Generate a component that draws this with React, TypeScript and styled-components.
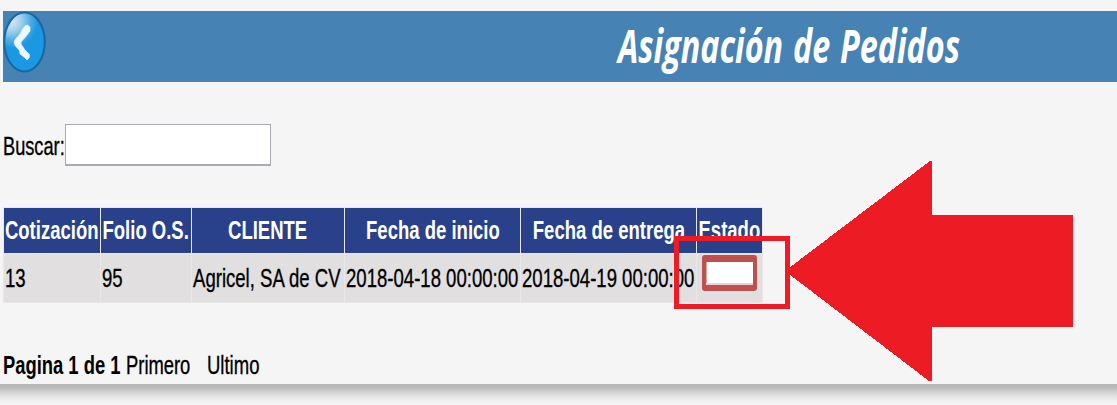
import React from "react";
import styled, { createGlobalStyle } from "styled-components";

const GlobalStyle = createGlobalStyle`
  body {
    margin: 0;
    background: #f5f5f5;
    overflow: hidden;
    font-family: "Liberation Sans", Arial, sans-serif;
  }
`;

const Page = styled.main`
  position: relative;
  box-sizing: border-box;
  width: 1117px;
  height: 405px;
  padding: 11px 0 0 3px;
  display: flex;
  flex-direction: column;
  color: #000;
  overflow: hidden;
`;

const Condensed = styled.span<{ $scale: number; $bold?: boolean; $size?: number; $center?: boolean }>`
  display: block;
  flex: none;
  white-space: pre;
  font-size: ${(p) => p.$size ?? 26}px;
  line-height: 30px;
  font-weight: ${(p) => (p.$bold ? 700 : 400)};
  -webkit-text-stroke: ${(p) => (p.$bold ? 0 : 0.35)}px currentColor;
  transform: scaleX(${(p) => p.$scale});
  transform-origin: ${(p) => (p.$center ? "center" : "left")} center;
`;

const Banner = styled.header`
  display: flex;
  flex: none;
  height: 71px;
  background: #4682b4;
`;

const BackButton = styled.button`
  width: 43px;
  height: 62px;
  padding: 0;
  border: 0;
  background: none;

  svg {
    display: block;
  }
`;

const Title = styled.h1`
  margin: 9px 0 0 572px;
  font: italic 700 46px/50px "Open Sans", sans-serif;
  color: #fff;
  white-space: nowrap;
  word-spacing: 2px;
  transform: scaleX(0.703);
  transform-origin: left center;
`;

const SearchRow = styled.label`
  display: flex;
  flex: none;
  align-items: center;
  height: 42px;
  margin-top: 42px;
`;

const SearchLabel = styled.span`
  display: flex;
  width: 62px;
  padding-top: 2px;
`;

const SearchInput = styled.input`
  box-sizing: border-box;
  width: 206px;
  height: 42px;
  padding: 0 6px;
  border: 1px solid #abaab3;
  border-bottom-width: 2px;
  border-radius: 0;
  background: #fff;
  font: 20px "Liberation Sans", sans-serif;
  outline: 0;
`;

const Table = styled.div`
  display: grid;
  flex: none;
  grid-template-columns: 96px 90px 152px 175px 175px 65px;
  grid-template-rows: 45px 48px;
  gap: 1px;
  width: 758px;
  box-sizing: content-box;
  margin-top: 41px;
  padding: 1px;
  background: #e9e7e7;
`;

const HeadCell = styled.div`
  display: flex;
  min-width: 0;
  justify-content: center;
  align-items: center;
  padding-bottom: 2px;
  background: #29418a;
  color: #fff;
`;

const Cell = styled.div`
  display: flex;
  min-width: 0;
  align-items: center;
  padding-left: 1px;
  background: #e1dfe0;
`;

const StatusField = styled.div`
  box-sizing: border-box;
  width: 55px;
  height: 36px;
  margin: -10px 0 0 4px;
  border: 4px solid #c0504d;
  border-top-width: 7px;
  border-bottom-width: 6px;
  border-radius: 3px;
  background: #fff;
  box-shadow: inset 0 -2px 0 #e6d3d3, inset 1px 0 0 #dba5a4;
`;

const Pager = styled.nav`
  display: flex;
  flex: none;
  margin-top: 47px;
  height: 34px;
`;

const PagerItem = styled.span<{ $width: number }>`
  display: flex;
  width: ${(p) => p.$width}px;
`;

const BottomShadow = styled.footer`
  flex: none;
  height: 21px;
  margin-left: -3px;
  background: linear-gradient(#b3b3b3 0, #bdbdbd 4px, #dadada 10px, #ebebeb 15px, #f7f7f7 21px);
`;

const Highlight = styled.div`
  position: absolute;
  box-sizing: border-box;
  left: 674px;
  top: 236px;
  width: 116px;
  height: 73px;
  border: 5px solid #ed1c24;
`;

const Arrow = styled.svg`
  position: absolute;
  left: 785px;
  top: 161px;
`;

const columns = [
  { title: "Cotización", value: "13" },
  { title: "Folio O.S.", value: "95" },
  { title: "CLIENTE", value: "Agricel, SA de CV" },
  { title: "Fecha de inicio", value: "2018-04-18 00:00:00" },
  { title: "Fecha de entrega", value: "2018-04-19 00:00:00" },
  { title: "Estado", value: null },
];

export default function App() {
  return (
    <Page>
      <GlobalStyle />
      <Banner>
        <BackButton aria-label="Regresar">
          <svg width="43" height="62" viewBox="0 0 43 62">
            <defs>
              <radialGradient id="gloss" gradientUnits="userSpaceOnUse" cx="8" cy="10" r="27">
                <stop offset="0" stopColor="#d5e9f5" />
                <stop offset="0.35" stopColor="#a9d3ee" />
                <stop offset="0.75" stopColor="#4aa9e4" />
                <stop offset="1" stopColor="#1b98e3" />
              </radialGradient>
            </defs>
            <ellipse cx="21.500" cy="31" rx="20.300" ry="29.500" fill="url(#gloss)" stroke="#176aa1" strokeWidth="2.200" />
            <path
              d="M24.500 14L27 16V20L22.500 26L18 31V33L22 39L26.500 43.500V46.500L24 49L21.500 46.500L17 43L16.500 39.500L12 34.500L11 31L12.500 28L17 23L19.500 18L22 15Z"
              fill="#edf7fd"
              stroke="#edf7fd"
              strokeWidth="0.600"
            />
          </svg>
        </BackButton>
        <Title>Asignación de Pedidos</Title>
      </Banner>
      <SearchRow>
        <SearchLabel>
          <Condensed $scale={0.7}>Buscar:</Condensed>
        </SearchLabel>
        <SearchInput type="text" />
      </SearchRow>
      <Table>
        {columns.map((c) => (
          <HeadCell key={c.title}>
            <Condensed $bold $center $scale={0.712}>{c.title}</Condensed>
          </HeadCell>
        ))}
        {columns.map((c) => (
          <Cell key={c.title}>
            {c.value ? <Condensed $scale={0.714}>{c.value}</Condensed> : <StatusField />}
          </Cell>
        ))}
      </Table>
      <Pager>
        <PagerItem $width={123}>
          <Condensed $bold $size={25} $scale={0.735}>Pagina 1 de 1</Condensed>
        </PagerItem>
        <PagerItem $width={81}>
          <Condensed $size={25} $scale={0.735}>Primero</Condensed>
        </PagerItem>
        <PagerItem $width={60}>
          <Condensed $size={25} $scale={0.74}>Ultimo</Condensed>
        </PagerItem>
      </Pager>
      <BottomShadow />
      <Highlight />
      <Arrow width="289" height="221" viewBox="0 0 289 221" shapeRendering="crispEdges">
        <path d="M0 110L145 0H147V54H287L288 55V165L287 166H147V220H144Z" fill="#ed1c24" />
      </Arrow>
    </Page>
  );
}
